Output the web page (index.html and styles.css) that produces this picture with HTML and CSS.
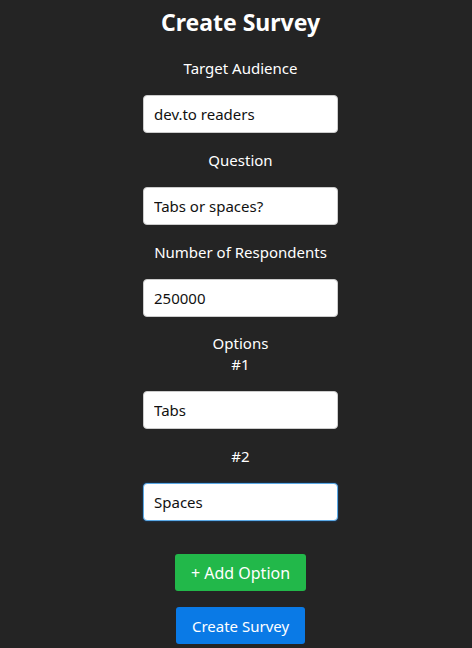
FILE: index.html
```html
<!DOCTYPE html>
<html lang="en">
<head>
<meta charset="UTF-8">
<meta name="viewport" content="width=device-width, initial-scale=1.0">
<title>Create Survey</title>
<link rel="stylesheet" href="styles.css">
</head>
<body>
<div class="container">
  <h1>Create Survey</h1>
  <form id="surveyForm">
    <label for="audience">Target Audience</label>
    <input type="text" id="audience" value="dev.to readers">
    <label for="question">Question</label>
    <input type="text" id="question" value="Tabs or spaces?">
    <label for="respondents">Number of Respondents</label>
    <input type="text" id="respondents" value="250000">
    <div class="options-title">Options</div>
    <div id="optionList">
      <label for="option1">#1</label>
      <input type="text" id="option1" value="Tabs">
      <label for="option2">#2</label>
      <input type="text" id="option2" value="Spaces">
    </div>
    <input type="button" id="addOption" class="btn-add" value="+ Add Option">
    <input type="submit" class="btn-create" value="Create Survey">
  </form>
</div>
<script>
  var last = document.getElementById('option2');
  last.focus();
  last.setSelectionRange(last.value.length, last.value.length);
</script>
</body>
</html>
```

FILE: styles.css
```css
body {
    font-family: "Noto Sans", "Open Sans", sans-serif;
    margin: 0;
    padding: 0 0 0 9px;
    background-color: #242424;
    color: #fff;
}

.container {
    width: 195px;
    margin: 0 auto;
    text-align: center;
}

h1 {
    font-size: 23px;
    font-weight: bold;
    margin: 0 -40px;
    padding: 6px 0 19px;
    line-height: 32px;
    white-space: nowrap;
}

form {
    display: flex;
    flex-direction: column;
    align-items: center;
}

label,
.options-title {
    display: block;
    font-size: 15px;
    line-height: 22px;
    margin-bottom: 16px;
    white-space: nowrap;
}

.options-title {
    margin-bottom: 0;
    line-height: 20px;
}

#optionList {
    display: flex;
    flex-direction: column;
    align-items: center;
}

input[type="text"] {
    box-sizing: border-box;
    width: 195px;
    height: 38px;
    padding: 0 10px;
    margin-bottom: 16px;
    border: 1px solid #ccc;
    border-radius: 4px;
    font-family: inherit;
    font-size: 15px;
    color: #111;
    background-color: #fff;
    caret-color: #000;
}

input:focus {
    outline: none;
    border-color: #5aa9e6;
    box-shadow: 0 0 2px rgba(0, 123, 255, 0.5);
}

input[type="submit"],
input[type="button"] {
    font-family: inherit;
    font-size: 15px;
    color: #fff;
    border: none;
    border-radius: 3px;
    cursor: pointer;
    height: 37px;
}

.btn-add {
    width: 131px;
    margin-top: 17px;
    margin-bottom: 16px;
    font-size: 16px !important;
    background-color: #22b84a;
}

.btn-create {
    width: 129px;
    background-color: #0a7ae6;
}
```
